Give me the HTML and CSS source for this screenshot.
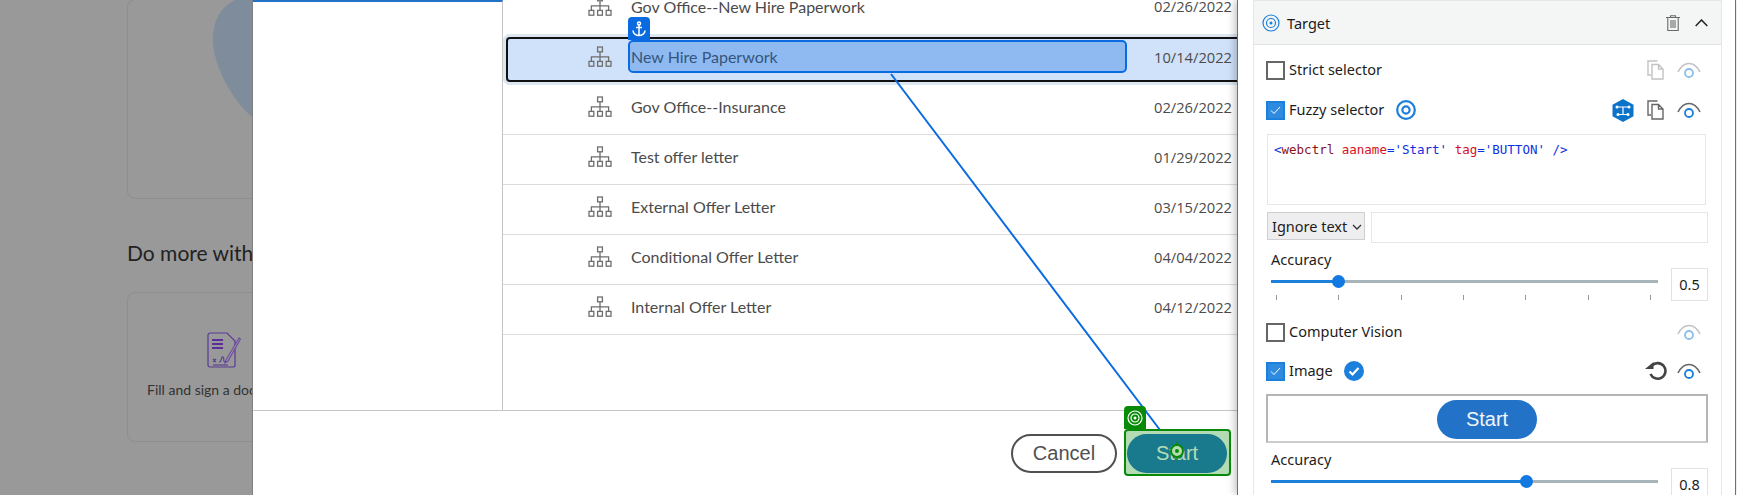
FILE: index.html
```html
<!DOCTYPE html>
<html lang="en">
<head>
    <meta charset="UTF-8">
    <meta name="viewport" content="width=device-width, initial-scale=1.0">
    <title>Target</title>
    <link rel="stylesheet" href="styles.css">
</head>
<body>
<svg width="0" height="0" class="defs">
    <symbol id="flow" viewBox="0 0 24 22">
        <g fill="none" stroke="#6e6e6e" stroke-width="1.3">
            <rect x="9.6" y="1" width="4.8" height="4.8"/>
            <rect x="1" y="15.4" width="4.8" height="4.8"/>
            <rect x="9.6" y="15.4" width="4.8" height="4.8"/>
            <rect x="18.2" y="15.4" width="4.8" height="4.8"/>
            <path d="M12 5.800v9.600M3.400 15.400v-4.600h17.200v4.600"/>
        </g>
    </symbol>
    <symbol id="copy" viewBox="0 0 17 20">
        <path d="M10.500 1H1v14h3M5 4.500h6.500l4.500 4.500v10H5zM11.500 4.500V9H16" fill="none" stroke="currentColor" stroke-width="1.400"/>
    </symbol>
    <symbol id="eye" viewBox="0 0 24 16">
        <path d="M1 10C4 4 8 1.500 12 1.500s8 2.500 11 8.500" fill="none" stroke="currentColor" stroke-width="1.600"/>
        <circle cx="12" cy="11" r="4" fill="none" stroke="#1b7fdc" stroke-width="1.800"/>
    </symbol>
</svg>

<div class="page">
    <div class="backdrop">
        <svg class="blob" width="252" height="140"><path d="M235 0C220 8 213 20 213 40C213 65 232 100 252 117V0Z" fill="#7f8c9c"/></svg>
        <div class="hero-card"></div>
        <h3 class="more-title">Do more with</h3>
        <div class="tool-card">
            <svg class="sign-icon" width="34" height="36" viewBox="0 0 34 36">
                <path d="M3 1h17l8 8v24a2 2 0 0 1-2 2H3a2 2 0 0 1-2-2V3a2 2 0 0 1 2-2z" fill="#999" stroke="#5b3a93" stroke-width="1.200"/>
                <path d="M5 8h11M5 12h11M5 16h11" stroke="#5b2e9b" stroke-width="2"/>
                <path d="M19 28L32 6l1.500 1L21 29l-3 2z" fill="#999" stroke="#6e4aa5" stroke-width="1.100"/>
                <path d="M6 33h15" stroke="#5b3a93" stroke-width="1.100"/>
                <path d="M6 27l3 3M9 27l-3 3M12 30c3 0 2-6 4-5s-1 5 3 5" stroke="#5b3a93" stroke-width="1.100" fill="none"/>
            </svg>
            <span class="tool-label">Fill and sign a document</span>
        </div>
    </div>

    <div class="dialog">
        <div class="dialog-body">
            <div class="side-pane"></div>
            <div class="file-list">
                <div class="row row-top"><svg class="row-icon"><use href="#flow"/></svg><span class="row-name">Gov Office--New Hire Paperwork</span><span class="row-date">02/26/2022</span></div>
                <div class="row row-selected"><svg class="row-icon"><use href="#flow"/></svg><span class="row-name">New Hire Paperwork</span><span class="row-date">10/14/2022</span></div>
                <div class="row"><svg class="row-icon"><use href="#flow"/></svg><span class="row-name">Gov Office--Insurance</span><span class="row-date">02/26/2022</span></div>
                <div class="row"><svg class="row-icon"><use href="#flow"/></svg><span class="row-name">Test offer letter</span><span class="row-date">01/29/2022</span></div>
                <div class="row"><svg class="row-icon"><use href="#flow"/></svg><span class="row-name">External Offer Letter</span><span class="row-date">03/15/2022</span></div>
                <div class="row"><svg class="row-icon"><use href="#flow"/></svg><span class="row-name">Conditional Offer Letter</span><span class="row-date">04/04/2022</span></div>
                <div class="row"><svg class="row-icon"><use href="#flow"/></svg><span class="row-name">Internal Offer Letter</span><span class="row-date">04/12/2022</span></div>
            </div>
        </div>
        <div class="dialog-footer">
            <button class="btn-cancel">Cancel</button>
            <button class="btn-start">Start</button>
        </div>
    </div>

    <div class="panel">
        <div class="group">
            <div class="group-head">
                <svg class="target-icon" width="18" height="18" viewBox="0 0 18 18" fill="none" stroke="#1b7fdc"><circle cx="9" cy="9" r="8" stroke-width="1.200"/><circle cx="9" cy="9" r="4.500" stroke-width="1.200"/><circle cx="9" cy="9" r="1.500" fill="#1b7fdc" stroke="none"/></svg>
                <span class="group-title">Target</span>
                <svg class="trash" width="14" height="16" viewBox="0 0 14 16" fill="none" stroke="#6a6a6a" stroke-width="1.100"><path d="M0 2.500h14M4.500 2.500V.7h5v1.800M1.800 2.500v13h10.400v-13M5 5v8M7 5v8M9 5v8"/></svg>
                <svg class="chevron" width="13" height="8" viewBox="0 0 13 8" fill="none" stroke="#222" stroke-width="1.500"><path d="M.7 7L6.500 1l5.800 6"/></svg>
            </div>
            <div class="group-body">
                <div class="opt-row opt-strict">
                    <span class="check"></span><span class="opt-label">Strict selector</span>
                    <span class="opt-tools dim"><svg class="copy-icon"><use href="#copy"/></svg><svg class="eye-icon"><use href="#eye"/></svg></span>
                </div>
                <div class="opt-row opt-fuzzy">
                    <span class="check checked"><svg width="11" height="9" viewBox="0 0 11 9" fill="none" stroke="#fff"><path d="M1 4.500l3 3 6-6.500"/></svg></span><span class="opt-label">Fuzzy selector</span>
                    <svg class="bullseye" width="20" height="20" viewBox="0 0 20 20" fill="none" stroke="#1b7fdc"><circle cx="10" cy="10" r="8.800" stroke-width="2.200"/><circle cx="10" cy="10" r="3.600" stroke-width="2.200"/></svg>
                    <span class="opt-tools">
                        <svg class="hex" width="22" height="23" viewBox="0 0 22 23"><path d="M11 0l10.500 5.800v11.400L11 23 .5 17.200V5.800z" fill="#0b73c9"/><path d="M5 8h12M11 8v7.500M6 15.500h10" stroke="#fff" stroke-width="1.200"/><g fill="#fff"><circle cx="5" cy="8" r="1.500"/><circle cx="17" cy="8" r="1.500"/><circle cx="6" cy="15.500" r="1.500"/><circle cx="16" cy="15.500" r="1.500"/></g></svg>
                        <svg class="copy-icon"><use href="#copy"/></svg><svg class="eye-icon"><use href="#eye"/></svg>
                    </span>
                </div>
                <div class="selector-box"><span class="x-val">&lt;</span><span class="x-tag">webctrl</span> <span class="x-attr">aaname</span><span class="x-val">=</span><span class="x-val">'Start'</span> <span class="x-attr">tag</span><span class="x-val">=</span><span class="x-val">'BUTTON'</span> <span class="x-val">/&gt;</span></div>
                <div class="ignore-row">
                    <div class="ignore-select">Ignore text <svg width="10" height="6" viewBox="0 0 10 6" fill="none" stroke="#333" stroke-width="1.300"><path d="M1 1l4 4 4-4"/></svg></div>
                    <div class="ignore-input"></div>
                </div>
                <div class="acc-label">Accuracy</div>
                <div class="acc-row">
                    <div class="slider-wrap">
                        <div class="slider"><div class="slider-fill" style="width:17.6%"></div></div>
                        <div class="ticks"><i></i><i></i><i></i><i></i><i></i><i></i><i></i></div>
                    </div>
                    <div class="acc-value">0.5</div>
                </div>
                <div class="opt-row opt-cv">
                    <span class="check"></span><span class="opt-label">Computer Vision</span>
                    <span class="opt-tools dim"><svg class="eye-icon"><use href="#eye"/></svg></span>
                </div>
                <div class="opt-row opt-image">
                    <span class="check checked"><svg width="11" height="9" viewBox="0 0 11 9" fill="none" stroke="#fff"><path d="M1 4.500l3 3 6-6.500"/></svg></span><span class="opt-label">Image</span>
                    <svg class="ok-icon" width="20" height="20" viewBox="0 0 20 20"><circle cx="10" cy="10" r="10" fill="#1b7fdc"/><path d="M5.500 10.500l3 3 6-6.500" fill="none" stroke="#fff" stroke-width="2.200"/></svg>
                    <span class="opt-tools">
                        <svg class="redo" width="22" height="20" viewBox="0 0 22 20" fill="none"><path d="M7 4.500A7.800 7.800 0 1 1 5.500 13" stroke="#444" stroke-width="2.600"/><path d="M0 8h8.500V1z" fill="#444"/></svg>
                        <svg class="eye-icon"><use href="#eye"/></svg>
                    </span>
                </div>
                <div class="image-box"><span class="image-start">Start</span></div>
                <div class="acc-label">Accuracy</div>
                <div class="acc-row">
                    <div class="slider-wrap">
                        <div class="slider"><div class="slider-fill" style="width:66.1%"></div></div>
                    </div>
                    <div class="acc-value">0.8</div>
                </div>
            </div>
        </div>
    </div>

    <!-- overlays drawn by the picker -->
    <svg class="link-line" width="1737" height="495"><path d="M891 74L1160 430" stroke="#0a6ae0" stroke-width="2"/></svg>
    <div class="anchor-box"></div>
    <div class="anchor-tab">
        <svg width="14" height="16" viewBox="0 0 14 16" fill="none" stroke="#fff" stroke-width="1.500"><circle cx="7" cy="2.500" r="1.500"/><path d="M7 4v10.500M4 6.500h6M1 9.500c0 3 3 5 6 5s6-2 6-5"/></svg>
    </div>
    <div class="target-box"></div>
    <div class="target-tab">
        <svg width="16" height="16" viewBox="0 0 16 16" fill="none" stroke="#fff"><circle cx="8" cy="8" r="7" stroke-width="1.200"/><circle cx="8" cy="8" r="4" stroke-width="1.200"/><circle cx="8" cy="8" r="1.500" fill="#fff" stroke="none"/></svg>
    </div>
    <svg class="target-dot" width="16" height="18" viewBox="0 0 16 18" fill="none"><path d="M8 0v3M8 15v3" stroke="#0a8a0a" stroke-width="1.500"/><circle cx="8" cy="9" r="6" stroke="#0a8a0a" stroke-width="2" fill="#b5dcb0"/><circle cx="8" cy="9" r="2" fill="#0a8a0a"/></svg>
</div>
</body>
</html>
```

FILE: styles.css
```css
html, body {
    margin: 0;
    height: 495px;
    overflow: hidden;
}
.defs {
    position: absolute;
}
.page {
    position: relative;
    display: flex;
    width: 1737px;
    height: 495px;
    overflow: hidden;
    background: #fff;
    font-family: "Noto Sans", "Open Sans", sans-serif;
}

/* page behind the dialog */
.backdrop {
    position: relative;
    width: 252px;
    flex: none;
    background: #999;
    padding-left: 127px;
    box-sizing: border-box;
    overflow: hidden;
    font-family: Lato, "Open Sans", sans-serif;
}
.blob {
    position: absolute;
    left: 0;
    top: 0;
}
.hero-card {
    position: relative;
    width: 300px;
    height: 200px;
    margin-top: -1px;
    box-sizing: border-box;
    border: 1px solid #8e8e8e;
    border-radius: 8px;
}
.more-title {
    margin: 41px 0 0;
    font-size: 21px;
    line-height: 26px;
    font-weight: 400;
    color: #222;
    white-space: nowrap;
}
.tool-card {
    width: 300px;
    height: 150px;
    margin-top: 26px;
    box-sizing: border-box;
    border: 1px solid #8e8e8e;
    border-radius: 8px;
    padding: 39px 0 0 19px;
}
.sign-icon {
    display: block;
    margin-left: 60px;
}
.tool-label {
    display: block;
    margin-top: 13px;
    font-size: 14px;
    line-height: 18px;
    color: #333;
    white-space: nowrap;
}

/* dialog */
.dialog {
    width: 985px;
    flex: none;
    display: flex;
    flex-direction: column;
    border-left: 1px solid #808080;
    box-sizing: border-box;
    background: #fff;
    overflow: hidden;
}
.dialog-body {
    height: 411px;
    flex: none;
    display: flex;
    box-sizing: border-box;
    border-bottom: 1px solid #c4c4c4;
    overflow: hidden;
}
.side-pane {
    width: 249px;
    flex: none;
    border-top: 2px solid #2272c8;
    border-right: 1px solid #c4c4c4;
}
.file-list {
    flex: 1;
    min-width: 0;
    margin-top: -16px;
}
.row {
    height: 50px;
    box-sizing: border-box;
    display: flex;
    align-items: center;
    border-bottom: 1px solid #dcdcdc;
    padding: 0 5px 6px 85px;
    font-family: Lato, "Open Sans", sans-serif;
    font-size: 16px;
    color: #4b4b4b;
}
.row-icon {
    width: 24px;
    height: 22px;
    flex: none;
}
.row-name {
    margin-left: 19px;
    flex: 1;
}
.row-date {
    font-family: "Open Sans", sans-serif;
    font-size: 14.700px;
}
.row-top {
    border-bottom: 0;
}
/* black focus box runs past the panel edge */
.row-selected {
    height: 51px;
    margin-right: -8px;
    padding-right: 13px;
    border-bottom: 0;
    background: #d0e2f9;
    box-shadow: inset 0 0 0 3px #dde7f1;
    outline: 2px solid #111;
    outline-offset: -5px;
    border-radius: 7px;
}
.dialog-footer {
    flex: 1;
    display: flex;
    justify-content: flex-end;
    align-items: flex-start;
    gap: 10px;
    padding: 23px 10px 0 0;
}
.btn-cancel, .btn-start {
    height: 39px;
    border-radius: 20px;
    font-family: "Liberation Sans", Arial, sans-serif;
    font-size: 20px;
}
.btn-cancel {
    width: 106px;
    border: 2px solid #505050;
    background: #fff;
    color: #505050;
}
.btn-start {
    width: 100px;
    border: 0;
    background: #2272c8;
    color: #fff;
}

/* properties panel */
.panel {
    position: relative;
    width: 499px;
    flex: none;
    box-sizing: border-box;
    border-left: 1px solid #2d7fd3;
    border-right: 1px solid #2d7fd3;
    padding: 0 13px 0 15px;
    background: #fff;
    box-shadow: -2px 0 8px rgba(0, 0, 0, .25);
    color: #1c1c1c;
}
.group {
    border: 1px solid #e6e6e6;
    height: 520px;
    box-sizing: border-box;
}
.group-head {
    height: 44px;
    display: flex;
    align-items: center;
    background: #f4f5f5;
    border-bottom: 1px solid #e2e2e2;
    padding: 0 13px 0 8px;
    box-sizing: border-box;
    font-size: 14.500px;
}
.group-title {
    margin-left: 7px;
    flex: 1;
}
.chevron {
    margin-left: 15px;
}
.group-body {
    padding: 0 13px 0 12px;
}
.opt-row {
    display: flex;
    align-items: center;
    font-size: 14.500px;
    height: 24px;
}
.opt-strict {
    margin-top: 13px;
}
.opt-fuzzy {
    margin-top: 16px;
}
.opt-cv {
    margin-top: 19px;
}
.opt-image {
    margin-top: 15px;
}
.check {
    width: 19px;
    height: 19px;
    flex: none;
    box-sizing: border-box;
    border: 2px solid #666;
    background: #fff;
    display: flex;
    align-items: center;
    justify-content: center;
}
.check.checked {
    border-color: #1b7fdc;
    background: #2f8be0;
}
.opt-label {
    margin: 0 0 2px 4px;
}
.bullseye {
    margin-left: 12px;
}
.ok-icon {
    margin-left: 11px;
}
.opt-tools {
    margin-left: auto;
    display: flex;
    align-items: center;
    gap: 13px;
    color: #666;
    padding-right: 7px;
}
.opt-tools.dim {
    color: #888;
}
.opt-tools.dim svg {
    opacity: .5;
}
.redo {
    margin-right: -3px;
}
.copy-icon {
    width: 17px;
    height: 20px;
}
.eye-icon {
    width: 24px;
    height: 16px;
}
.selector-box {
    margin: 12px 2px 0 1px;
    height: 71px;
    box-sizing: border-box;
    border: 1px solid #e6e6e6;
    padding: 7px 6px 0;
    font-family: "DejaVu Sans Mono", monospace;
    font-size: 12.500px;
    white-space: pre-wrap;
}
.x-tag {
    color: #8a1020;
}
.x-attr {
    color: #d8101c;
}
.x-val {
    color: #1030e0;
}
.ignore-row {
    display: flex;
    align-items: flex-start;
    gap: 6px;
    margin: 7px 0 0 1px;
}
.ignore-select {
    width: 98px;
    height: 28px;
    box-sizing: border-box;
    border: 1px solid #cfcfcf;
    background: #eeeef0;
    font-size: 14.500px;
    line-height: 26px;
    padding-left: 4px;
    white-space: nowrap;
}
.ignore-select svg {
    margin-left: 1px;
    vertical-align: 2px;
}
.ignore-input {
    flex: 1;
    height: 31px;
    box-sizing: border-box;
    border: 1px solid #e6e6e6;
}
.acc-label {
    margin: 6px 0 1px 5px;
    font-size: 14.500px;
    line-height: 20px;
}
.acc-row {
    display: flex;
    align-items: flex-start;
    padding-left: 5px;
}
.slider-wrap {
    width: 387px;
    flex: none;
}
.slider {
    height: 3px;
    margin-top: 10px;
    background: #a9b3ba;
}
.slider-fill {
    position: relative;
    height: 3px;
    background: #1b7fdc;
}
.slider-fill::after {
    content: "";
    position: absolute;
    right: -6px;
    top: -5px;
    width: 13px;
    height: 13px;
    border-radius: 50%;
    background: #1179e0;
}
.ticks {
    display: flex;
    justify-content: space-between;
    margin-top: 12px;
    padding: 0 7px 0 5px;
}
.ticks i {
    width: 1px;
    height: 5px;
    background: #999;
}
.acc-value {
    width: 37px;
    height: 33px;
    box-sizing: border-box;
    margin: -2px 0 0 13px;
    border: 1px solid #e2e2e2;
    font-size: 14.500px;
    line-height: 31px;
    text-align: center;
}
.image-box {
    margin-top: 11px;
    height: 49px;
    box-sizing: border-box;
    padding-top: 2px;
    border: 2px solid #b5b5b5;
    border-bottom-color: #ccc;
    display: flex;
    align-items: center;
    justify-content: center;
}
.image-start {
    width: 100px;
    height: 39px;
    border-radius: 20px;
    background: #2272c8;
    color: #f2f6fb;
    font-family: "Liberation Sans", Arial, sans-serif;
    font-size: 20px;
    line-height: 39px;
    text-align: center;
}

/* overlays */
.link-line {
    position: absolute;
    left: 0;
    top: 0;
    pointer-events: none;
}
.anchor-box {
    position: absolute;
    left: 628px;
    top: 40px;
    width: 499px;
    height: 33px;
    box-sizing: border-box;
    border: 2px solid #0a6ae0;
    border-radius: 5px;
    background: rgba(10, 106, 224, .33);
}
.anchor-tab {
    position: absolute;
    left: 628px;
    top: 17px;
    width: 22px;
    height: 23px;
    background: #0a6ae0;
    border-radius: 4px 4px 0 0;
    display: flex;
    align-items: center;
    justify-content: center;
}
.target-box {
    position: absolute;
    left: 1124px;
    top: 429px;
    width: 107px;
    height: 47px;
    box-sizing: border-box;
    border: 2px solid #078a07;
    border-radius: 4px;
    background: rgba(7, 138, 7, .3);
}
.target-tab {
    position: absolute;
    left: 1124px;
    top: 406px;
    width: 22px;
    height: 23px;
    background: #078a07;
    border-radius: 4px 4px 0 0;
    display: flex;
    align-items: center;
    justify-content: center;
}
.target-dot {
    position: absolute;
    left: 1169px;
    top: 442px;
}
```
